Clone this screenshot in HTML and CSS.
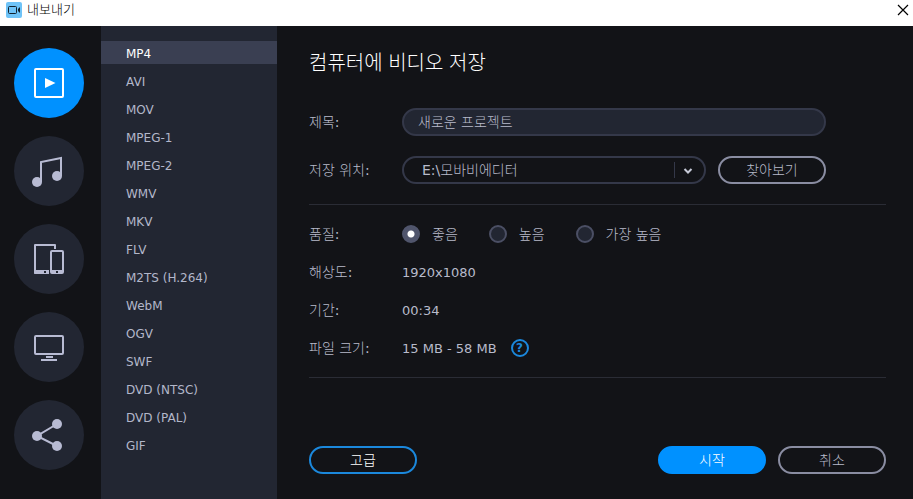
FILE: index.html
```
<!DOCTYPE html>
<html lang="ko">
<head>
  <meta charset="UTF-8">
  <meta name="viewport" content="width=device-width, initial-scale=1.0">
  <title>내보내기</title>
  <link rel="stylesheet" href="styles.css">
</head>
<body>
  <!-- TITLE BAR -->
  <header class="titlebar">
    <svg class="app-icon" width="16" height="16" viewBox="0 0 16 16">
      <rect width="16" height="16" rx="2" fill="#6fc3f7"/>
      <rect x="2.5" y="4.5" width="8" height="7" rx="1" fill="none" stroke="#10202c"/>
      <path d="M12 7l2-2v6l-2-2z" fill="#10202c"/>
    </svg>
    <h1>내보내기</h1>
    <button class="close" type="button" aria-label="닫기">
      <svg width="12" height="12" viewBox="0 0 12 12"><path d="M1 1l10 10M11 1L1 11" stroke="#000" stroke-width="1.2"/></svg>
    </button>
  </header>

  <div class="window">
    <!-- CATEGORIES -->
    <nav class="categories">
      <button class="category active" type="button" aria-label="비디오">
        <svg width="34" height="34" viewBox="0 0 34 34">
          <rect x="3" y="3" width="28" height="28" rx="1" fill="none" stroke="#fff" stroke-width="2"/>
          <path d="M13 12l10.500 5-10.500 5z" fill="#fff"/>
        </svg>
      </button>
      <button class="category" type="button" aria-label="오디오">
        <svg width="34" height="34" viewBox="0 0 34 34">
          <path d="M9 28V8l20-4v18" fill="none" stroke="#b8bbd3" stroke-width="2"/>
          <circle cx="5" cy="28" r="5" fill="#b8bbd3"/>
          <circle cx="25" cy="22" r="5" fill="#b8bbd3"/>
        </svg>
      </button>
      <button class="category" type="button" aria-label="장치">
        <svg width="34" height="34" viewBox="0 0 34 34">
          <path d="M17 31H3V3h20v4" fill="none" stroke="#b8bbd3" stroke-width="2" stroke-linejoin="round"/>
          <path d="M2 28h15v4H3l-1-1z" fill="#b8bbd3"/>
          <rect x="19" y="9" width="12" height="22" rx="1" fill="none" stroke="#b8bbd3" stroke-width="2"/>
          <path d="M19 28h12v3H19z" fill="#b8bbd3"/>
          <path d="M12 29h2v2h-2zM24 29h2v2h-2z" fill="#222632"/>
        </svg>
      </button>
      <button class="category" type="button" aria-label="TV">
        <svg width="34" height="34" viewBox="0 0 34 34">
          <rect x="3" y="6" width="28" height="18" rx="1" fill="none" stroke="#b8bbd3" stroke-width="2"/>
          <path d="M14 26h7v2h-7zM9 29h16v2H9z" fill="#b8bbd3"/>
        </svg>
      </button>
      <button class="category" type="button" aria-label="공유">
        <svg width="34" height="34" viewBox="0 0 34 34">
          <path d="M25 6L5 18l20 10" fill="none" stroke="#b8bbd3" stroke-width="2"/>
          <circle cx="25" cy="6" r="5" fill="#b8bbd3"/>
          <circle cx="5" cy="18" r="5" fill="#b8bbd3"/>
          <circle cx="25" cy="28" r="5" fill="#b8bbd3"/>
        </svg>
      </button>
    </nav>

    <!-- FORMATS -->
    <nav class="formats">
      <a class="active" href="#mp4">MP4</a>
      <a href="#avi">AVI</a>
      <a href="#mov">MOV</a>
      <a href="#mpeg1">MPEG-1</a>
      <a href="#mpeg2">MPEG-2</a>
      <a href="#wmv">WMV</a>
      <a href="#mkv">MKV</a>
      <a href="#flv">FLV</a>
      <a href="#m2ts">M2TS (H.264)</a>
      <a href="#webm">WebM</a>
      <a href="#ogv">OGV</a>
      <a href="#swf">SWF</a>
      <a href="#dvd-ntsc">DVD (NTSC)</a>
      <a href="#dvd-pal">DVD (PAL)</a>
      <a href="#gif">GIF</a>
    </nav>

    <!-- SETTINGS -->
    <main class="panel">
      <h2>컴퓨터에 비디오 저장</h2>

      <form class="settings">
        <div class="group fields">
          <div class="row">
            <label class="name" for="title">제목:</label>
            <input class="text" id="title" type="text" value="새로운 프로젝트">
          </div>
          <div class="row">
            <label class="name" for="folder">저장 위치:</label>
            <div class="select">
              <select id="folder"><option>E:\모바비에디터</option></select>
              <svg class="arrow" width="32" height="16" viewBox="0 0 32 16">
                <path d="M.5 0v16" stroke="#343849"/>
                <path d="M10.500 7l3.500 3.500L17.500 7" fill="none" stroke="#c6cad8" stroke-width="2"/>
              </svg>
            </div>
            <button class="btn" type="button">찾아보기</button>
          </div>
        </div>

        <div class="group">
          <div class="row" role="radiogroup" aria-label="품질">
            <span class="name">품질:</span>
            <div class="radios">
              <label><input type="radio" name="quality" checked>좋음</label>
              <label><input type="radio" name="quality">높음</label>
              <label><input type="radio" name="quality">가장 높음</label>
            </div>
          </div>
          <div class="row"><span class="name">해상도:</span><span>1920x1080</span></div>
          <div class="row"><span class="name">기간:</span><span>00:34</span></div>
          <div class="row">
            <span class="name">파일 크기:</span><span>15 MB - 58 MB</span>
            <button class="help" type="button" aria-label="도움말">?</button>
          </div>
        </div>
      </form>

      <footer class="actions">
        <button class="btn outline" type="button">고급</button>
        <button class="btn primary" type="button">시작</button>
        <button class="btn" type="button">취소</button>
      </footer>
    </main>
  </div>
</body>
</html>
```
FILE: styles.css
```
*{box-sizing:border-box}
body{margin:0;min-height:100vh;display:flex;flex-direction:column;background:#121317;color:#b8bbcb;font-family:"DejaVu Sans","Noto Sans CJK KR Light","Noto Sans CJK KR",sans-serif;font-size:13px}
button,input,select{font:inherit;color:inherit;margin:0}
button{padding:0;border:0;background:none;cursor:pointer}
svg{display:block}

/* title bar */
.titlebar{display:flex;align-items:center;height:26px;padding:0 4px 6px 6px;background:#fff;color:#000}
.titlebar h1{margin:0 auto 0 5px;font-size:13px;line-height:20px;font-weight:normal}

.window{flex:1;display:flex}

/* round category buttons */
.categories{display:flex;flex-direction:column;gap:18px;padding:22px 17px 22px 14px}
.category{display:flex;align-items:center;justify-content:center;width:70px;height:70px;border-radius:50%;background:#222632}
.category.active{background:#0091ff}
.category svg{overflow:visible}

/* format list */
.formats{display:flex;flex-direction:column;gap:5px;width:176px;padding-top:15px;background:#222632;font-size:12px}
.formats a{padding-left:25px;line-height:26px;height:23px;color:#b3b7ca;text-decoration:none}
.formats a.active{background:#3a3f52;color:#fff}

/* settings panel */
.panel{flex:1;min-width:0;display:flex;flex-direction:column;padding:20px 27px 25px 32px}
.panel h2{margin:0 0 30px;font-family:"Noto Sans CJK KR",sans-serif;font-size:20px;line-height:32px;font-weight:300;color:#fff}
.group{display:flex;flex-direction:column;gap:20px;padding-bottom:20px;border-bottom:1px solid #2a2c35}
.group + .group{padding-top:20px}
.row{display:flex;align-items:center;height:18px}
.fields .row{height:28px;margin-right:60px}
.name{flex:none;width:93px;padding-bottom:2px}
.name,.text,.select,.radios,.btn{font-size:14px}
.text{flex:1;min-width:0;height:28px;padding:0 14px 2px;border:2px solid #343849;border-radius:14px;background:#222632}
.select{flex:1;min-width:0;position:relative;margin-right:12px}
.select select{display:block;width:100%;height:28px;padding:0 40px 0 18px;border:2px solid #343849;border-radius:14px;background:#121317;appearance:none}
.arrow{position:absolute;top:6px;right:0;pointer-events:none}

.radios{display:flex;gap:31px}
.radios label{display:flex;align-items:center;gap:12px;line-height:18px}
.radios input{width:18px;height:18px;border:2px solid #4b4f64;border-radius:50%;background:#222632;appearance:none}
.radios input:checked{border-color:#50556c;background:radial-gradient(circle,#fff 3px,#50556c 4px)}

.help{width:18px;height:18px;margin-left:14px;border:2px solid #1b88dc;border-radius:50%;color:#1b88dc;font-size:12px;line-height:14px;font-weight:bold}

.btn{width:108px;height:28px;padding-bottom:2px;border:2px solid #8a8da2;border-radius:14px}
.btn.outline{border-color:#1b88dc;color:#fff}
.btn.primary{border-color:#0091ff;background:#0091ff;color:#fff}
.actions{display:flex;gap:12px;margin-top:auto}
.actions .outline{margin-right:auto}
```
